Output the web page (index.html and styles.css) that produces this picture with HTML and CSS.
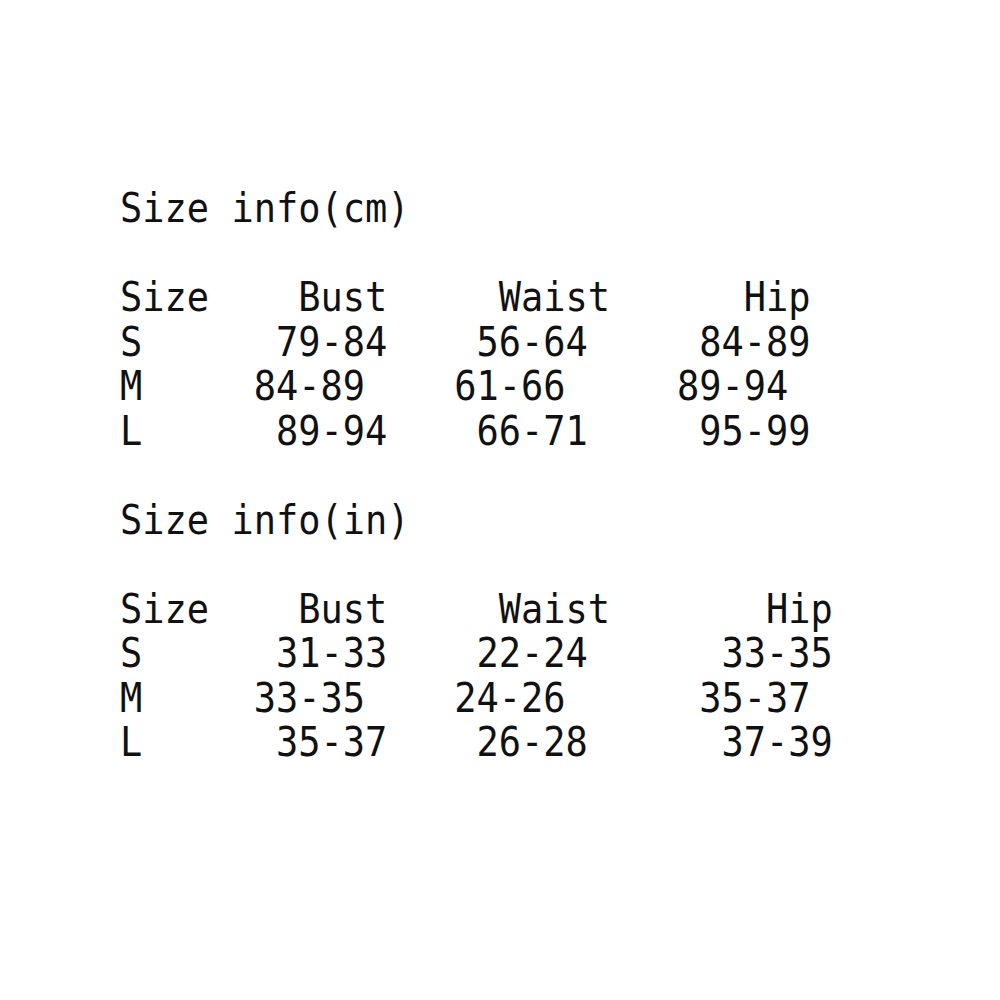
FILE: index.html
```html
<!DOCTYPE html>
<html lang="en">
<head>
<meta charset="utf-8">
<title>Size info</title>
<link rel="stylesheet" href="styles.css">
</head>
<body>
<main class="sheet">
  <section class="block">
    <div class="line"><span class="cell">Size info(cm)</span></div>
    <div class="line blank"> </div>
    <div class="line"><span class="cell">Size</span>    <span class="cell">Bust</span>     <span class="cell">Waist</span>      <span class="cell">Hip</span></div>
    <div class="line"><span class="cell">S</span>      <span class="cell">79-84</span>    <span class="cell">56-64</span>     <span class="cell">84-89</span></div>
    <div class="line"><span class="cell">M</span>     <span class="cell">84-89</span>    <span class="cell">61-66</span>     <span class="cell">89-94</span></div>
    <div class="line"><span class="cell">L</span>      <span class="cell">89-94</span>    <span class="cell">66-71</span>     <span class="cell">95-99</span></div>
  </section>
  <div class="line blank"> </div>
  <section class="block">
    <div class="line"><span class="cell">Size info(in)</span></div>
    <div class="line blank"> </div>
    <div class="line"><span class="cell">Size</span>    <span class="cell">Bust</span>     <span class="cell">Waist</span>       <span class="cell">Hip</span></div>
    <div class="line"><span class="cell">S</span>      <span class="cell">31-33</span>    <span class="cell">22-24</span>      <span class="cell">33-35</span></div>
    <div class="line"><span class="cell">M</span>     <span class="cell">33-35</span>    <span class="cell">24-26</span>      <span class="cell">35-37</span></div>
    <div class="line"><span class="cell">L</span>      <span class="cell">35-37</span>    <span class="cell">26-28</span>      <span class="cell">37-39</span></div>
  </section>
</main>
</body>
</html>
```

FILE: styles.css
```css
html, body {
  margin: 0;
  padding: 0;
  background: #ffffff;
}

.sheet {
  width: 1000px;
  height: 1000px;
  box-sizing: border-box;
  padding: 187px 0 0 120px;
  font-family: "DejaVu Sans Mono", "Liberation Mono", monospace;
  font-size: 37px;
  color: #111111;
}

.line {
  white-space: pre;
  line-height: 44.5px;
  height: 44.5px;
  transform: scaleY(1.1);
  transform-origin: 50% 21.5px;
}
```
